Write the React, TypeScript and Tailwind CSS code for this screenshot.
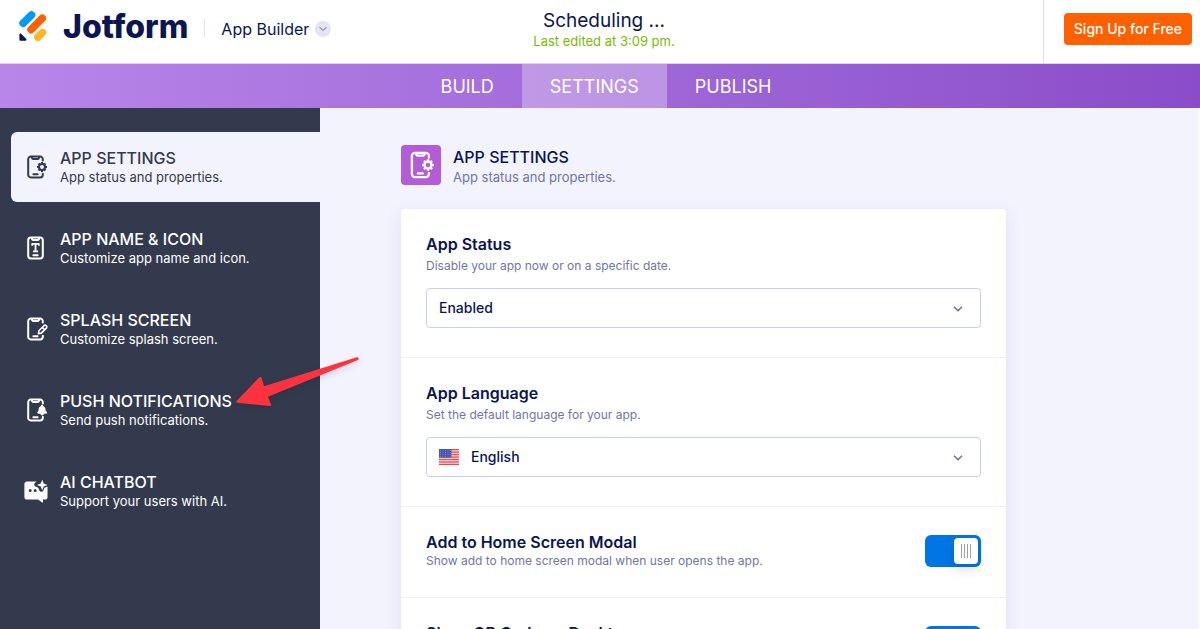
import type { ReactNode } from 'react';
import { ChevronDown } from 'lucide-react';

const PhoneFrame = ({ cut = false, children }: { cut?: boolean; children: ReactNode }) => (
  <svg
    viewBox="0 0 24 24"
    className="h-full w-full"
    fill="none"
    stroke="currentColor"
    strokeWidth="2"
    strokeLinecap="round"
    strokeLinejoin="round"
    aria-hidden="true"
  >
    {cut ? (
      <path d="M18.8 5.6V4.2a2.6 2.6 0 0 0-2.6-2.6H6.8a2.6 2.6 0 0 0-2.6 2.6v15.6a2.6 2.6 0 0 0 2.6 2.6h9.4a2.6 2.6 0 0 0 2.6-2.6v-1" />
    ) : (
      <rect x="4.2" y="1.6" width="14.6" height="20.8" rx="2.6" />
    )}
    <path d="M8 2.2v.6a1.2 1.2 0 0 0 1.2 1.2h4.6A1.2 1.2 0 0 0 15 2.8v-.6" />
    <path d="M9.4 19.2h4.2" />
    {children}
  </svg>
);

const SettingsIcon = () => (
  <PhoneFrame cut>
    <circle cx="18" cy="12" r="3" />
    <path
      strokeLinecap="butt"
      d="M18 9.2V7M18 17v-2.200M20.800 12H23M13 12h2.200M19.900 10.100l1.600-1.600M14.500 15.500l1.600-1.600M19.900 13.900l1.600 1.600M14.500 8.500l1.600 1.600"
    />
  </PhoneFrame>
);

const NameIcon = () => (
  <PhoneFrame>
    <path strokeWidth="1.8" strokeLinecap="butt" d="M8.2 9.8V7.8h6.6v2M11.5 7.8v7.4M9 15.4h5" />
  </PhoneFrame>
);

const SplashIcon = () => (
  <PhoneFrame cut>
    <path strokeWidth="1.6" d="m14.400 16.600.5-2.900 5-5a1.700 1.700 0 0 1 2.400 2.400l-5 5zM18.400 10.400l2.200 2.200" />
  </PhoneFrame>
);

const PushIcon = () => (
  <PhoneFrame cut>
    <path
      fill="currentColor"
      stroke="none"
      d="M17.900 6.800c.8 0 1.300.5 1.300 1.200 1.600.7 2.300 2 2.300 3.600 0 1 .5 1.600 1.200 2.200.7.6.4 1.900-.7 1.900h-2.100c-.2 1-.9 1.600-1.800 1.600s-1.600-.6-1.800-1.600h-1.900c-1.100 0-1.400-1.200-.7-1.900.7-.7.9-1.300.9-2.300 0-1.500.7-2.800 2.200-3.500 0-.7.4-1.200 1.100-1.200z"
    />
  </PhoneFrame>
);

const ChatIcon = () => (
  <svg viewBox="0 0 24 24" className="h-full w-full" fill="currentColor" aria-hidden="true">
    <path
      fillRule="evenodd"
      d="M3 2.500h9.600l-1.300 1.100c-1.500 1-1.400 3.200.2 4l2.700 1.200 1.200 2.700c.8 1.700 3.100 1.700 3.900.1l1.200-2.800 3-1.300v10.400c0 1.700-1 2.700-2.600 2.700H19v2.400c0 .5-.5.7-.9.4l-3.900-2.800H3c-1.600 0-2.600-1-2.600-2.600V5.100C.4 3.500 1.400 2.500 3 2.500zM6.200 10a1.500 1.500 0 1 0 0 3 1.500 1.500 0 0 0 0-3zM11.200 10a1.500 1.500 0 1 0 0 3 1.500 1.500 0 0 0 0-3z"
    />
    <path d="m18.200.8 1.500 3.700 3.700 1.500-3.700 1.500-1.500 3.700-1.500-3.700L13 6l3.700-1.500z" />
  </svg>
);

const LogoMark = () => (
  <svg viewBox="0 0 28 32" className="h-8 w-7" fill="none" strokeWidth="7.600" strokeLinecap="round" aria-hidden="true">
    <path d="M4.100 13.200 12.500 5" stroke="#0099ff" />
    <path d="M12 19.600 23.300 8.200" stroke="#ff6100" />
    <path d="M18.800 27.200l4.600-4.600" stroke="#ffb629" />
    <path d="M.4 24.600c0-1.100 1-1.500 1.700-.8l5 5c.8.8.3 1.900-.7 1.900H1.700c-.8 0-1.300-.5-1.300-1.300z" fill="#0a1551" />
  </svg>
);

const UsFlag = () => (
  <svg viewBox="0 0 20 16" className="h-4 w-5" aria-hidden="true">
    <rect width="20" height="16" fill="#fbe4e6" />
    {[0, 1, 2, 3, 4, 5, 6].map((i) => (
      <rect key={i} y={i * 2.46} width="20" height="1.35" fill="#ee4a50" />
    ))}
    <rect width="12.5" height="8.6" fill="#4356ab" />
    {[1.5, 3.5, 5.5, 7.2].map((y) =>
      [1.5, 4, 6.5, 9, 11.2].map((x) => <circle key={`${x}-${y}`} cx={x} cy={y} r=".4" fill="#c5cbea" />),
    )}
  </svg>
);

const menuItems = [
  { title: 'APP SETTINGS', text: 'App status and properties.', Icon: SettingsIcon, active: true },
  { title: 'APP NAME & ICON', text: 'Customize app name and icon.', Icon: NameIcon },
  { title: 'SPLASH SCREEN', text: 'Customize splash screen.', Icon: SplashIcon },
  { title: 'PUSH NOTIFICATIONS', text: 'Send push notifications.', Icon: PushIcon },
  { title: 'AI CHATBOT', text: 'Support your users with AI.', Icon: ChatIcon },
];

const Header = () => (
  <header className="flex h-16 shrink-0 border-b border-[#dcd3ee] bg-white">
    <div className="flex flex-1 items-start">
      <a href="#" className="flex items-center gap-4 pt-[9px] pl-[19px]" aria-label="Jotform">
        <LogoMark />
        <span className="pt-0.5 text-[32px] leading-8 font-extrabold">Jotform</span>
      </a>
      <div className="mt-[18px] ml-4 h-5 w-px bg-[#e3e5f5]" />
      <button type="button" className="mt-[19px] ml-4 flex items-center gap-1.5 text-base leading-5">
        App Builder
        <span className="flex size-4 items-center justify-center rounded-full bg-[#e3e5f5]">
          <ChevronDown className="size-3 text-[#5a6080]" />
        </span>
      </button>
    </div>
    <div className="pt-[9px] pl-2 text-center">
      <h1 className="text-[19px] leading-6">Scheduling ...</h1>
      <p className="text-[13px] leading-4 text-[#78bb07]">Last edited at 3:09 pm.</p>
    </div>
    <div className="flex flex-1 justify-end">
      <div className="border-l border-[#dcdcf0] pt-[13px] pr-2 pl-5">
        <button type="button" className="h-8 rounded bg-[#ff6100] px-2.5 text-sm font-medium text-white">
          Sign Up for Free
        </button>
      </div>
    </div>
  </header>
);

const Tabs = () => (
  <nav className="flex h-11 shrink-0 justify-center bg-linear-to-r from-[#b886e9] to-[#8b4cc9] pl-3 text-lg text-white">
    <a href="#" className="flex items-center px-7 pt-0.5">BUILD</a>
    <a href="#" className="flex items-center bg-white/30 px-7 pt-0.5" aria-current="page">SETTINGS</a>
    <a href="#" className="flex items-center px-7 pt-0.5">PUBLISH</a>
  </nav>
);

const Sidebar = () => (
  <aside className="w-80 shrink-0 bg-[#343a4d] pt-6 pl-[11px]">
    <nav className="flex flex-col gap-[11px]">
      {menuItems.map(({ title, text, Icon, active }) => (
        <a
          key={title}
          href="#"
          className={`flex items-center gap-3 rounded-l-md py-4 pl-[13px] ${
            active ? 'bg-[#f3f3fe] text-[#343a4d]' : 'text-white'
          }`}
        >
          <span className="size-6 shrink-0">
            <Icon />
          </span>
          <span>
            <span className="block text-base leading-5 font-medium">{title}</span>
            <span className="block text-[13px] leading-[18px]">{text}</span>
          </span>
        </a>
      ))}
    </nav>
  </aside>
);

type SelectProps = { id: string; label: string; hint: string; value: string; flag?: boolean };

const SelectSection = ({ id, label, hint, value, flag }: SelectProps) => (
  <section className="border-b border-[#f0f0f6] px-[25px] pt-[23px] pb-[29px]">
    <label htmlFor={id} className="block text-base leading-6 font-semibold">
      {label}
    </label>
    <p className="mt-0.5 text-xs leading-4 text-[#6f76a7]">{hint}</p>
    <div className="relative mt-3.5">
      {flag && (
        <span className="pointer-events-none absolute top-3 left-[13px]">
          <UsFlag />
        </span>
      )}
      <select
        id={id}
        className={`h-10 w-full appearance-none rounded border border-[#c8ceed] bg-white text-sm font-medium ${
          flag ? 'pl-11' : 'pl-3'
        }`}
      >
        <option>{value}</option>
      </select>
      <ChevronDown className="pointer-events-none absolute top-3.5 right-4 size-3.5 text-[#6f76a7]" strokeWidth={3} />
    </div>
  </section>
);

const ToggleSection = ({ id, label, hint }: { id: string; label: string; hint: string }) => (
  <section className="flex items-center justify-between border-b border-[#f0f0f6] px-[25px] pt-[25px] pb-[27px]">
    <div>
      <label htmlFor={id} className="block text-base leading-5 font-semibold">
        {label}
      </label>
      <p className="text-xs leading-[18px] text-[#6f76a7]">{hint}</p>
    </div>
    <div className="relative h-8 w-14">
      <input
        id={id}
        type="checkbox"
        defaultChecked
        className="peer block h-8 w-14 cursor-pointer appearance-none rounded-md bg-[#c8ceed] checked:bg-[#0075e3]"
      />
      <span className="pointer-events-none absolute top-[3px] left-[3px] flex h-[26px] w-6 items-center justify-center gap-0.5 rounded bg-white shadow-[0_6px_12px_rgba(10,21,81,0.12)] peer-checked:left-[29px]">
        <i className="h-3.5 w-px bg-[#979dc6]" />
        <i className="h-3.5 w-px bg-[#979dc6]" />
        <i className="h-3.5 w-px bg-[#979dc6]" />
        <i className="h-3.5 w-px bg-[#979dc6]" />
      </span>
    </div>
  </section>
);

const SettingsPanel = () => (
  <main className="flex-1 overflow-hidden border-r-2 border-[#fafafa] bg-[#f3f3fe] pt-[37px] pr-6 pl-[81px]">
    <div className="flex items-center gap-3">
      <div className="flex size-10 items-center justify-center rounded bg-[#b45bd6] p-1.5 text-white">
        <SettingsIcon />
      </div>
      <div>
        <h2 className="text-base leading-6 font-medium">APP SETTINGS</h2>
        <p className="text-[13px] leading-4 text-[#6f76a7]">App status and properties.</p>
      </div>
    </div>
    <div className="mt-6 max-w-[605px] rounded bg-white shadow-[0_4px_16px_rgba(84,95,180,0.12)]">
      <SelectSection id="status" label="App Status" hint="Disable your app now or on a specific date." value="Enabled" />
      <SelectSection id="language" label="App Language" hint="Set the default language for your app." value="English" flag />
      <ToggleSection
        id="home-modal"
        label="Add to Home Screen Modal"
        hint="Show add to home screen modal when user opens the app."
      />
      <ToggleSection id="qr-code" label="Show QR Code on Desktop" hint="Show QR code when user opens the app on desktop." />
    </div>
  </main>
);

const App = () => {
  return (
    <div className="relative flex h-screen flex-col overflow-hidden bg-white font-['Inter',sans-serif] text-[#0a1551]">
      <Header />
      <Tabs />
      <div className="flex min-h-0 flex-1">
        <Sidebar />
        <SettingsPanel />
      </div>
      {/* Pointer to the push notifications entry */}
      <svg
        viewBox="0 0 134 62"
        className="pointer-events-none absolute top-[350px] left-[230px] h-[62px] w-[134px] drop-shadow-md"
        aria-hidden="true"
      >
        <path
          d="M7 50.500 29.200 27.600c1-1 2.200-.6 2.500.6L34 36.200 126.800 7.200c1.800-.5 2.600 2 1.100 2.700L38 46.700l3 7.500c.5 1.200-.2 2-1.400 1.900L7.200 52.700c-1.300-.1-1.400-1.200-.2-2.200z"
          fill="#fb3340"
        />
      </svg>
    </div>
  );
};

export default App;
